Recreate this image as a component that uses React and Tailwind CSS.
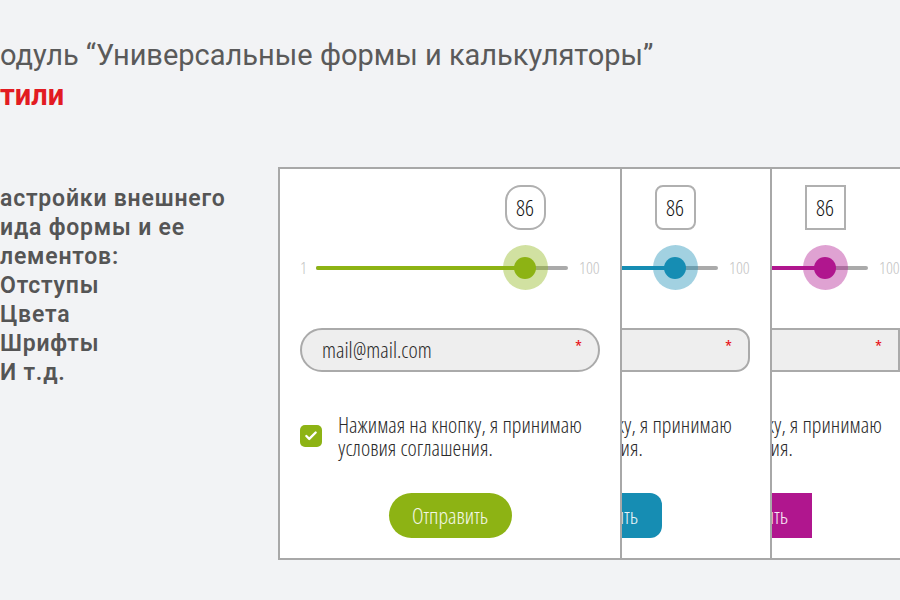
import { Check } from "lucide-react";

const variants = [
  {
    fill: "bg-[#8db314]",
    halo: "bg-[#8db314]/40",
    bubble: "rounded-[16px]",
    input: "rounded-full",
    button: "rounded-full",
    z: "z-30",
    shift: "",
  },
  {
    fill: "bg-[#168db3]",
    halo: "bg-[#168db3]/40",
    bubble: "rounded-[8px]",
    input: "rounded-[14px]",
    button: "rounded-[12px]",
    z: "z-20",
    shift: "-ml-[194px]",
  },
  {
    fill: "bg-[#b0168e]",
    halo: "bg-[#b0168e]/40",
    bubble: "rounded-none",
    input: "rounded-none",
    button: "rounded-none",
    z: "z-10",
    shift: "-ml-[194px]",
  },
];

const narrow = "font-['Open_Sans',sans-serif] font-light font-stretch-condensed";

function FormCard({ v }) {
  return (
    <div
      className={`relative ${v.z} ${v.shift} shrink-0 w-[344px] h-[393px] border-2 border-[#a8a8a8] bg-white px-[20px] pt-[76px] ${narrow}`}
    >
      {/* Slider */}
      <div className="flex items-center gap-[11px] h-[45px]">
        <span className="w-[5px] text-[17px] text-[#c4c4c4]">1</span>
        <div className="relative flex-1 h-[4px] rounded-full bg-[#aaaaaa]">
          <div className={`h-full w-[209px] rounded-full ${v.fill}`} />
          <div
            className={`absolute left-[186.5px] top-[-20.5px] w-[45px] h-[45px] rounded-full ${v.halo} flex items-center justify-center`}
          >
            <div className={`w-[22px] h-[22px] rounded-full ${v.fill}`} />
          </div>
          <div
            className={`absolute left-[188.5px] top-[-81px] w-[41px] h-[45px] border-2 border-[#b0b0b0] bg-white ${v.bubble} flex items-center justify-center text-[22px] text-[#111]`}
          >
            86
          </div>
        </div>
        <span className="w-[21px] text-[17px] text-[#c4c4c4]">100</span>
      </div>

      {/* Email */}
      <div
        className={`relative mt-[37.5px] h-[44px] border-2 border-[#aaaaaa] bg-[#eeeeee] ${v.input} flex items-center pl-[20px] text-[22px] text-[#2b2b2b]`}
      >
        mail@mail.com
        <span className="absolute right-[16px] top-[4px] text-[18px] font-normal text-[#e8141c]">*</span>
      </div>

      {/* Agreement */}
      <div className="mt-[41px] flex items-center gap-[16px]">
        <div className={`shrink-0 w-[22px] h-[22px] rounded-[5px] ${v.fill} flex items-center justify-center`}>
          <Check size={14} strokeWidth={4} className="text-white" />
        </div>
        <p className="whitespace-nowrap text-[22px] leading-[23px] text-[#2b2b2b]">
          Нажимая на кнопку, я принимаю
          <br />
          условия соглашения.
        </p>
      </div>

      {/* Submit */}
      <div className="mt-[34px] flex justify-center">
        <button
          className={`w-[123px] h-[45px] ${v.fill} ${v.button} text-[22px] text-white/90`}
        >
          Отправить
        </button>
      </div>
    </div>
  );
}

export default function App() {
  return (
    <div className="w-[900px] h-[600px] overflow-hidden bg-[#f2f3f5] font-['Roboto',sans-serif]">
      {/* Title */}
      <div className="pt-[35px]">
        <p className="text-[29px] leading-[40px] text-[#5a5a5a]">
          одуль “Универсальные формы и калькуляторы”
        </p>
        <p className="text-[29px] leading-[40px] font-bold text-[#e21b22]">тили</p>
      </div>

      <div className="mt-[52px] flex">
        {/* Notes */}
        <div className="w-[278px] shrink-0 pt-[17px] text-[23px] leading-[29px] tracking-[0.8px] font-semibold text-[#555]">
          <p>астройки внешнего</p>
          <p>ида формы и ее</p>
          <p>лементов:</p>
          <p>Отступы</p>
          <p>Цвета</p>
          <p>Шрифты</p>
          <p>И т.д.</p>
        </div>

        {/* Stacked style variants */}
        <div className="flex">
          {variants.map((v, i) => (
            <FormCard key={i} v={v} />
          ))}
        </div>
      </div>
    </div>
  );
}
